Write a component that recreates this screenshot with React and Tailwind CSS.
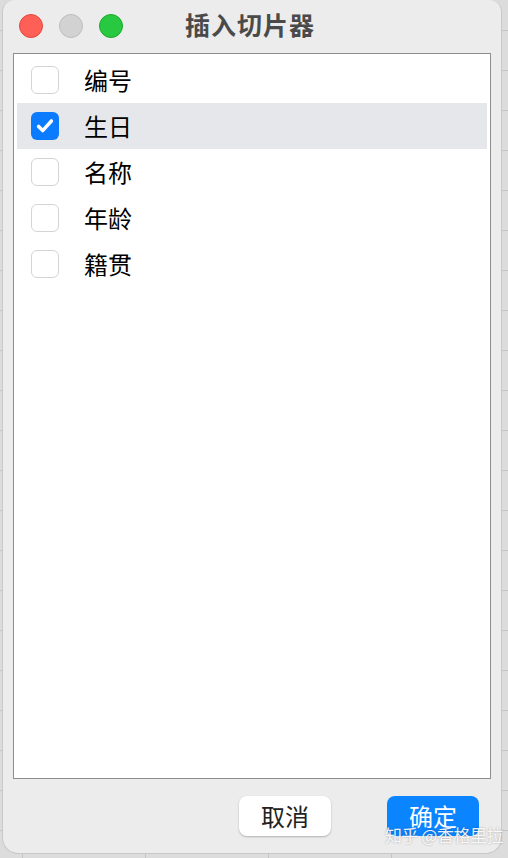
import React from "react";

const fields = [
  { id: 1, label: "编号", checked: false },
  { id: 2, label: "生日", checked: true },
  { id: 3, label: "名称", checked: false },
  { id: 4, label: "年龄", checked: false },
  { id: 5, label: "籍贯", checked: false },
];

/* ---------- Checkbox ---------- */
const Box = ({ checked }) =>
  checked ? (
    <span className="w-[28px] h-[28px] rounded-[6px] bg-[#0b7bff] flex items-center justify-center shrink-0">
      <svg viewBox="0 0 24 24" className="w-[22px] h-[22px]" fill="none" stroke="white" strokeWidth="3.8" strokeLinecap="round" strokeLinejoin="round">
        <path d="M5 12.5l4.5 4.5L19 6.5" />
      </svg>
    </span>
  ) : (
    <span className="w-[28px] h-[28px] rounded-[6px] bg-white border border-[#d4d4d4] shrink-0" />
  );

export default function App() {
  return (
    <div
      className="w-[508px] h-[858px] pl-[2px] pr-[6px] pb-[4px] bg-[#dcdcdc] bg-[linear-gradient(#c4c4c4_1px,transparent_1px),linear-gradient(90deg,#c4c4c4_1px,transparent_1px)] bg-[size:123px_40px] bg-[position:22px_30px] relative overflow-hidden"
      style={{ fontFamily: '"Noto Sans CJK SC", "Noto Sans", sans-serif' }}
    >
      <div className="h-full bg-[#ececec] rounded-t-[12px] rounded-b-[16px] border border-[#c8c8c8] border-t-0 flex flex-col">
        {/* Title bar */}
        <div className="h-[53px] relative flex items-center justify-center shrink-0">
          <div className="absolute left-[16px] top-[14px] flex gap-[16px]">
            <span className="w-[24px] h-[24px] rounded-full bg-[#fe5f57] border border-[#e2463f]" />
            <span className="w-[24px] h-[24px] rounded-full bg-[#d2d2d2] border border-[#bdbdbd]" />
            <span className="w-[24px] h-[24px] rounded-full bg-[#28c840] border border-[#1aab29]" />
          </div>
          <h1 className="text-[25px] font-bold text-[#4a4a4a] tracking-[1px] mt-[-4px] ml-[-4px]">插入切片器</h1>
        </div>

        {/* List */}
        <div className="mx-[10px] h-[726px] border border-[#8e8e8e] bg-white pt-[3px] px-[3px]">
          <ul>
            {fields.map((f) => (
              <li
                key={f.id}
                className={
                  f.checked
                    ? "h-[46px] flex items-center pl-[14px] gap-[25px] bg-[#e5e7ea]"
                    : "h-[46px] flex items-center pl-[14px] gap-[25px]"
                }
              >
                <Box checked={f.checked} />
                <span className="text-[24px] text-black leading-none">{f.label}</span>
              </li>
            ))}
          </ul>
        </div>

        {/* Footer */}
        <div className="flex justify-end gap-[56px] pr-[22px] pt-[17px]">
          <button type="button" className="w-[92px] h-[40px] rounded-[8px] bg-white shadow-[0_1px_2px_rgba(0,0,0,0.25)] text-[24px] text-[#222] leading-none">
            取消
          </button>
          <button type="button" className="w-[92px] h-[40px] rounded-[8px] bg-[#0a84ff] text-[24px] text-white leading-none">
            确定
          </button>
        </div>
      </div>

      {/* Watermark */}
      <span className="absolute left-[385px] top-[826px] text-[17px] tracking-[-0.5px] text-white/90 [text-shadow:0_0_2px_rgba(0,0,0,0.35)] leading-none whitespace-nowrap">
        知乎 @香格里拉
      </span>
    </div>
  );
}
